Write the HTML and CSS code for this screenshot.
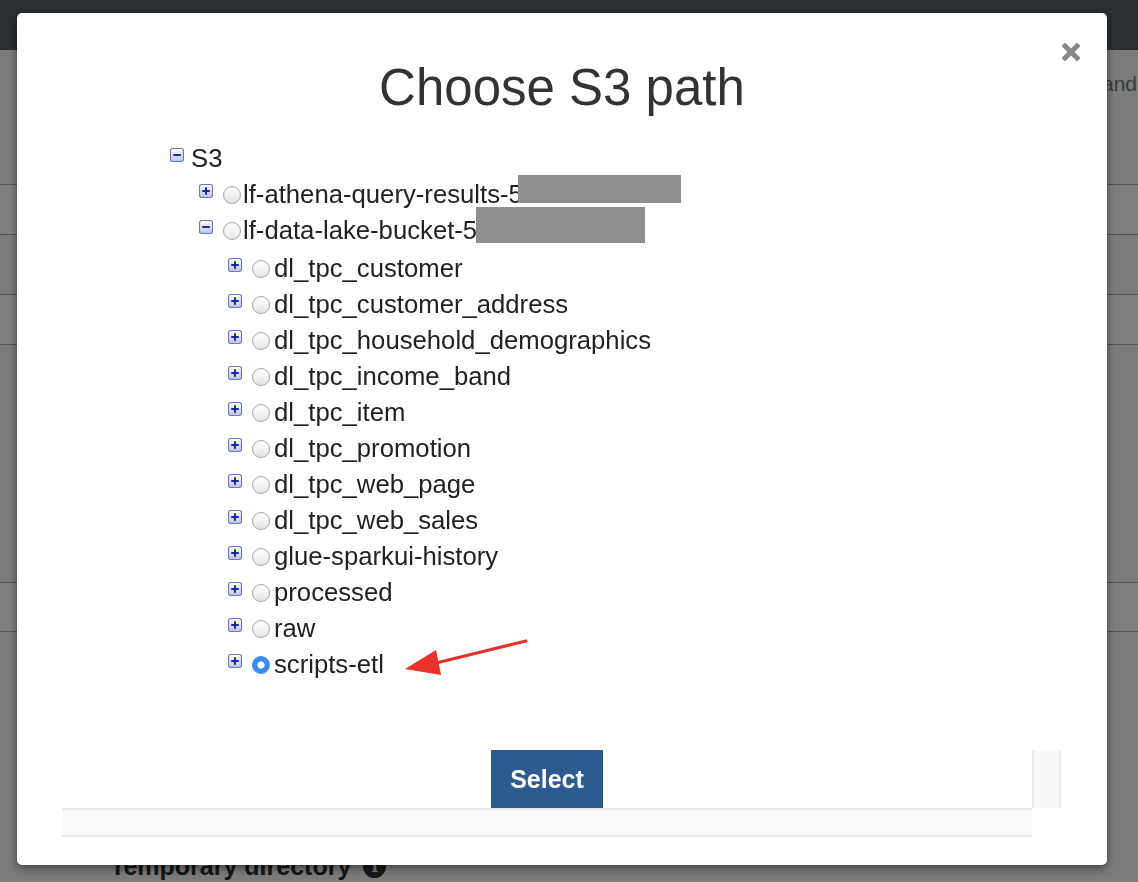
FILE: index.html
```html
<!DOCTYPE html>
<html>
<head>
<meta charset="utf-8">
<title>Choose S3 path</title>
<link rel="stylesheet" href="styles.css">
</head>
<body>
<svg class="defs" width="0" height="0" aria-hidden="true">
  <defs>
    <linearGradient id="togGrad" x1="0" y1="0" x2="0" y2="1">
      <stop offset="0" stop-color="#ffffff"/>
      <stop offset="1" stop-color="#bcc2e8"/>
    </linearGradient>
    <symbol id="plus" viewBox="0 0 13 13">
      <rect x="0.5" y="0.5" width="12" height="12" rx="2" fill="url(#togGrad)" stroke="#6e76c4"/>
      <path d="M3 6.5h7M6.5 3v7" stroke="#1a27a0" stroke-width="1.8"/>
    </symbol>
    <symbol id="minus" viewBox="0 0 13 13">
      <rect x="0.5" y="0.5" width="12" height="12" rx="2" fill="url(#togGrad)" stroke="#6e76c4"/>
      <path d="M3 6.5h7" stroke="#1a27a0" stroke-width="1.8"/>
    </symbol>
  </defs>
</svg>

<div class="page">
  <div class="topbar"></div>
  <div class="bg-row r1"><span class="bg-text">and</span></div>
  <div class="bg-row r2 light"></div>
  <div class="bg-row r3"></div>
  <div class="bg-row r4 light"></div>
  <div class="bg-row r5"></div>
  <div class="bg-row r6 light"></div>
  <div class="bg-row r7">
    <div class="field-label">Temporary directory <span class="info">i</span></div>
  </div>
</div>

<div class="backdrop"></div>

<div class="modal">
  <button class="close" aria-label="Close">
    <svg width="18" height="18" viewBox="0 0 18 18"><path d="M3 3L15 15M15 3L3 15" stroke="#888888" stroke-width="5" stroke-linecap="square"/></svg>
  </button>
  <h1 class="title">Choose S3 path</h1>

  <div class="tree">
    <div class="row lvl0">
      <svg class="tog"><use href="#minus"/></svg>
      <span class="label root">S3</span>
    </div>
    <div class="row lvl1">
      <svg class="tog"><use href="#plus"/></svg>
      <span class="radio"></span>
      <span class="label">lf-athena-query-results-500000000002</span>
    </div>
    <div class="row lvl1">
      <svg class="tog"><use href="#minus"/></svg>
      <span class="radio"></span>
      <span class="label">lf-data-lake-bucket-500000000000</span>
    </div>
    <div class="children">
      <div class="row lvl2"><svg class="tog"><use href="#plus"/></svg><span class="radio"></span><span class="label">dl_tpc_customer</span></div>
      <div class="row lvl2"><svg class="tog"><use href="#plus"/></svg><span class="radio"></span><span class="label">dl_tpc_customer_address</span></div>
      <div class="row lvl2"><svg class="tog"><use href="#plus"/></svg><span class="radio"></span><span class="label">dl_tpc_household_demographics</span></div>
      <div class="row lvl2"><svg class="tog"><use href="#plus"/></svg><span class="radio"></span><span class="label">dl_tpc_income_band</span></div>
      <div class="row lvl2"><svg class="tog"><use href="#plus"/></svg><span class="radio"></span><span class="label">dl_tpc_item</span></div>
      <div class="row lvl2"><svg class="tog"><use href="#plus"/></svg><span class="radio"></span><span class="label">dl_tpc_promotion</span></div>
      <div class="row lvl2"><svg class="tog"><use href="#plus"/></svg><span class="radio"></span><span class="label">dl_tpc_web_page</span></div>
      <div class="row lvl2"><svg class="tog"><use href="#plus"/></svg><span class="radio"></span><span class="label">dl_tpc_web_sales</span></div>
      <div class="row lvl2"><svg class="tog"><use href="#plus"/></svg><span class="radio"></span><span class="label">glue-sparkui-history</span></div>
      <div class="row lvl2"><svg class="tog"><use href="#plus"/></svg><span class="radio"></span><span class="label">processed</span></div>
      <div class="row lvl2"><svg class="tog"><use href="#plus"/></svg><span class="radio"></span><span class="label">raw</span></div>
      <div class="row lvl2"><svg class="tog"><use href="#plus"/></svg><span class="radio on"></span><span class="label">scripts-etl</span></div>
    </div>
    <span class="redact redact-a"></span>
    <span class="redact redact-b"></span>
    <svg class="arrow" width="130" height="40" viewBox="0 0 130 40">
      <path d="M124 3L30 26" stroke="#e8322a" stroke-width="3" stroke-linecap="round"/>
      <path d="M3 31L34 12L39 37Z" fill="#e8322a"/>
    </svg>
  </div>

  <div class="footer">
    <div class="btn-cell"><button class="select-btn">Select</button></div>
    <div class="side-box"></div>
    <div class="band"></div>
  </div>
</div>
</body>
</html>
```
FILE: styles.css
```css
html, body {
  margin: 0;
  padding: 0;
}
body {
  width: 1138px;
  height: 882px;
  overflow: hidden;
  background: #f4f6f4;
  font-family: "Liberation Sans", Arial, sans-serif;
}
.defs {
  position: absolute;
  width: 0;
  height: 0;
}

/* Background page, under the modal backdrop */
.page {
  display: flex;
  flex-direction: column;
}
.topbar {
  height: 50px;
  background: #555d61;
}
.bg-row {
  background: #f4f6f4;
  border-bottom: 1px solid #a8a8a8;
}
.bg-row.light {
  background: #fefefe;
}
.r1 {
  height: 135px;
  display: flex;
  justify-content: flex-end;
  padding-top: 22px;
  box-sizing: border-box;
}
.bg-text {
  font-size: 21px;
  color: #777;
  margin-right: 1px;
}
.r2 { height: 49px; }
.r3 { height: 59px; }
.r4 { height: 49px; }
.r5 { height: 237px; }
.r6 { height: 48px; }
.r7 {
  border-bottom: none;
  padding-top: 219px;
  padding-left: 110px;
  height: 250px;
  box-sizing: border-box;
}
.field-label {
  font-size: 25px;
  font-weight: bold;
  color: #2c2c2c;
  line-height: 30px;
  display: flex;
  align-items: center;
}
.info {
  display: inline-flex;
  justify-content: center;
  align-items: center;
  width: 23px;
  height: 23px;
  margin-left: 12px;
  border-radius: 50%;
  background: #333;
  color: #f4f6f4;
  font-family: "DejaVu Serif", serif;
  font-size: 17px;
  font-weight: bold;
}

.backdrop {
  position: fixed;
  inset: 0;
  background: rgba(0, 0, 0, 0.5);
}

/* Modal */
.modal {
  position: fixed;
  left: 17px;
  top: 13px;
  width: 1090px;
  box-sizing: border-box;
  padding: 45px 0 28px;
  background: #fff;
  border-radius: 5px;
  box-shadow: 0 3px 9px rgba(0, 0, 0, 0.5);
}
.close {
  position: absolute;
  top: 30px;
  right: 27px;
  width: 18px;
  height: 18px;
  padding: 0;
  border: none;
  background: none;
  display: flex;
}
.title {
  margin: 0;
  text-align: center;
  font-size: 51px;
  font-weight: normal;
  line-height: 60px;
  color: #333;
}

/* Tree */
.tree {
  position: relative;
  margin: 22px 0 0 153px;
  height: 542px;
}
.row {
  display: flex;
  align-items: center;
  height: 36px;
}
.lvl1 { padding-left: 29px; }
.lvl2 { padding-left: 58px; }
.children { padding-top: 2px; }
.tog {
  width: 14px;
  height: 14px;
  flex: none;
  margin-bottom: 6px;
  margin-right: 10px;
}
.lvl0 .tog { margin-right: 7px; }
.radio {
  width: 18px;
  height: 18px;
  flex: none;
  box-sizing: border-box;
  border: 1px solid #a6a6a6;
  border-radius: 50%;
  background: linear-gradient(#ffffff, #e6e6e6);
  margin-right: 2px;
  margin-top: 2px;
}
.lvl2 .radio { margin-right: 4px; }
.radio.on {
  border-color: #3a8cf5;
  background: radial-gradient(circle, #ffffff 0 3.3px, #3a8cf5 3.9px);
}
.label {
  font-size: 25.7px;
  color: #222;
  white-space: nowrap;
  line-height: 36px;
}
.redact {
  position: absolute;
  background: #8f8f8f;
}
.redact-a {
  left: 348px;
  top: 35px;
  width: 163px;
  height: 28px;
}
.redact-b {
  left: 306px;
  top: 67px;
  width: 169px;
  height: 36px;
}
.arrow {
  position: absolute;
  left: 232px;
  top: 498px;
}

/* Footer */
.footer {
  margin: 68px 0 0 45px;
  display: grid;
  grid-template-columns: 970px 29px;
  grid-template-rows: 58px 29px;
}
.btn-cell {
  display: flex;
  justify-content: center;
}
.select-btn {
  width: 112px;
  height: 58px;
  border: none;
  border-radius: 0;
  background: #2c5b8f;
  color: #fff;
  font-family: "Liberation Sans", Arial, sans-serif;
  font-size: 25px;
  font-weight: bold;
  padding: 0;
}
.side-box {
  background: #f8f8f8;
  border-left: 2px solid #ececec;
  border-right: 2px solid #ececec;
}
.band {
  background: #f9f9f9;
  border-top: 2px solid #e9e9e9;
  border-bottom: 2px solid #e9e9e9;
}
```
